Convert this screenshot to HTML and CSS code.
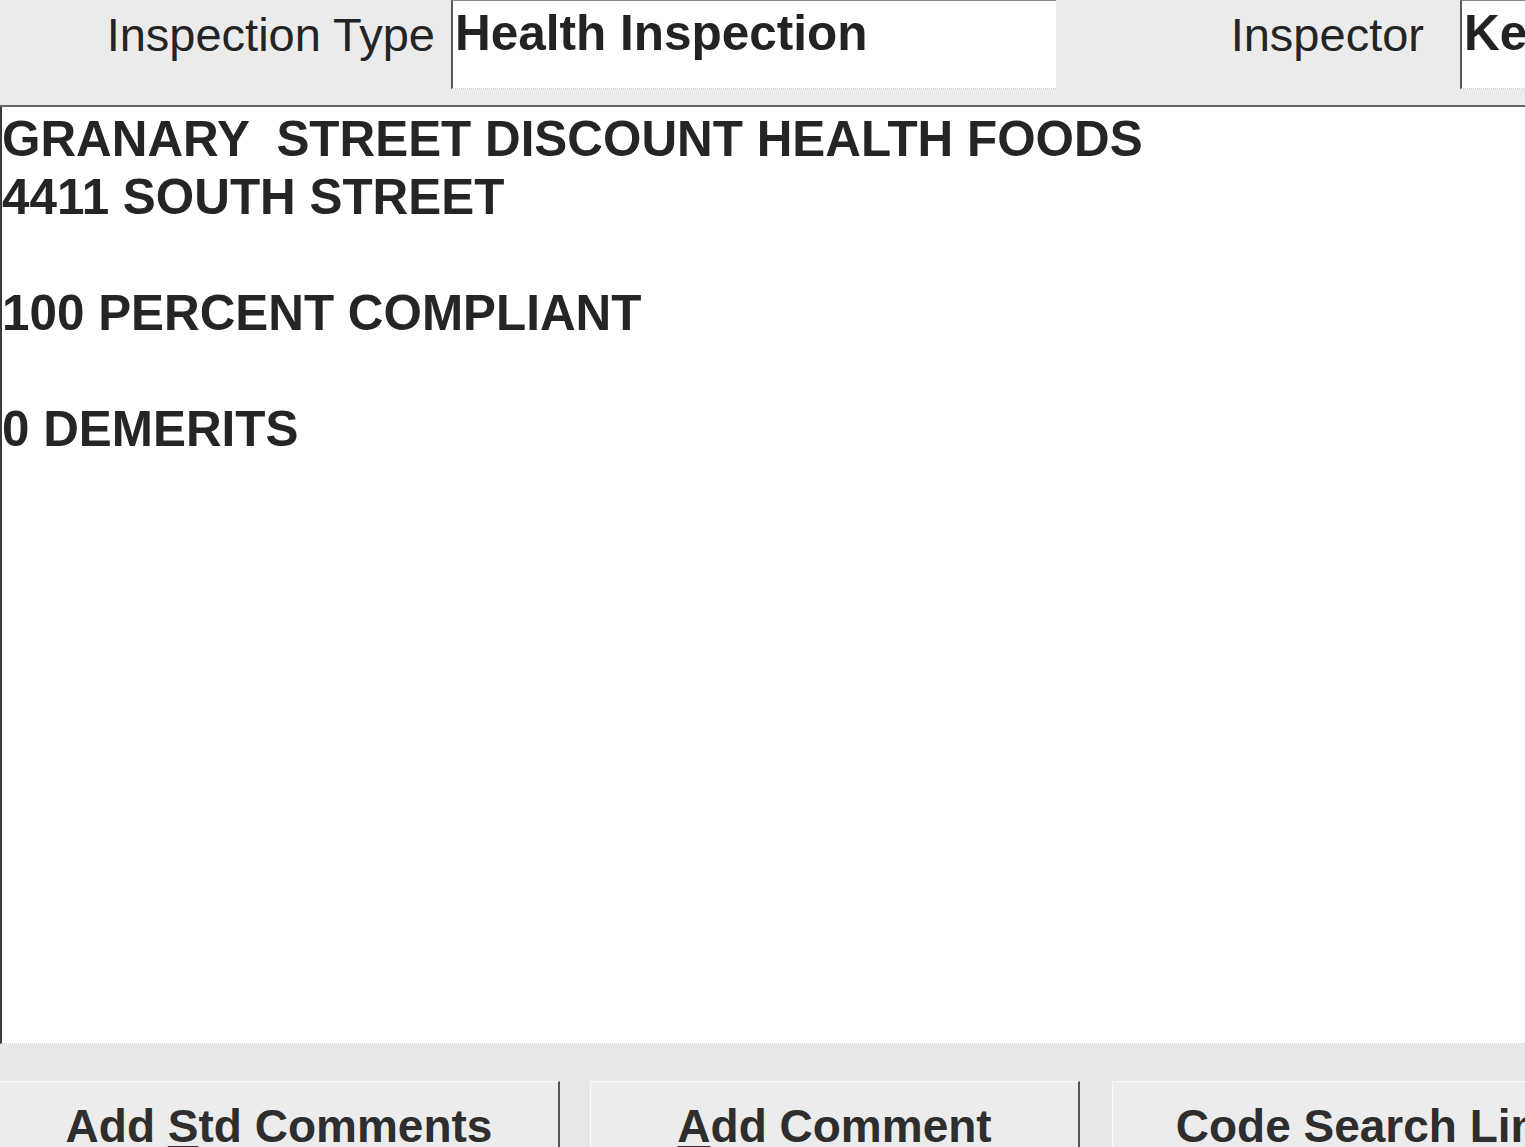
FILE: index.html
```html
<!DOCTYPE html>
<html lang="en">
<head>
<meta charset="utf-8">
<title>Inspection</title>
<link rel="stylesheet" href="styles.css">
</head>
<body>
<div class="app">
  <div class="topbar">
    <label class="lbl lbl-type">Inspection Type</label>
    <div class="field field-type">Health Inspection</div>
    <label class="lbl lbl-inspector">Inspector</label>
    <div class="field field-inspector">Kevin</div>
  </div>
  <div class="notes"><div class="line">GRANARY  STREET DISCOUNT HEALTH FOODS</div><div class="line">4411 SOUTH STREET</div><div class="line">&nbsp;</div><div class="line">100 PERCENT COMPLIANT</div><div class="line">&nbsp;</div><div class="line">0 DEMERITS</div></div>
  <div class="band"></div>
  <div class="buttons">
    <button class="btn btn-std"><span class="cap">Add <u>S</u>td Comments</span></button>
    <button class="btn btn-add"><span class="cap"><u>A</u>dd Comment</span></button>
    <button class="btn btn-code"><span class="cap">Code Search Link</span></button>
  </div>
</div>
</body>
</html>
```

FILE: styles.css
```css
html, body {
  margin: 0;
  padding: 0;
  background: #eaeaea;
  overflow: hidden;
}
body {
  font-family: "Liberation Sans", Arial, sans-serif;
  color: #262626;
  width: 1525px;
  height: 1147px;
}
.app {
  width: 1525px;
  display: flex;
  flex-direction: column;
}
.topbar {
  height: 105px;
  border-bottom: 2px solid #666;
  display: flex;
  align-items: flex-start;
  background: #ebebeb;
  white-space: nowrap;
}
.lbl {
  font-size: 47px;
  line-height: 58px;
  margin-top: 6px;
  text-align: right;
  color: #242424;
  flex: none;
}
.lbl-type {
  width: 435px;
  margin-right: 16px;
}
.lbl-inspector {
  width: 368px;
  margin-right: 36px;
}
.field {
  flex: none;
  height: 84px;
  background: #fff;
  border-left: 2px solid #5a5a5a;
  border-top: 1px solid #8a8a8a;
  border-bottom: 1px dotted #c8c8c8;
  padding: 3px 0 0 2px;
  font-size: 49.5px;
  font-weight: bold;
  line-height: 58px;
  color: #232323;
  overflow: hidden;
}
.field-type {
  width: 601px;
}
.field-inspector {
  width: 200px;
}
.notes {
  height: 933px;
  background: #fff;
  border-left: 2px solid #3a3a3a;
  border-bottom: 1px dotted #cfcfcf;
  padding-top: 3px;
  font-size: 49.4px;
  font-weight: bold;
  line-height: 58px;
  color: #252525;
  white-space: pre;
}
.line {
  height: 58px;
}
.band {
  height: 37px;
  background: #e7e7e7;
}
.buttons {
  display: flex;
  align-items: flex-start;
  height: 80px;
  background: #e7e7e7;
  overflow: hidden;
}
.btn {
  flex: none;
  height: 120px;
  margin: 0;
  background: #ececec;
  border: none;
  border-top: 1px solid #fbfbfb;
  border-left: 1px solid #fbfbfb;
  border-right: 2px solid #555;
  padding: 16px 0 0 0;
  font-family: "Liberation Sans", Arial, sans-serif;
  font-size: 46px;
  font-weight: bold;
  line-height: 56px;
  color: #2e2e2e;
  text-align: center;
  white-space: nowrap;
  display: flex;
  justify-content: center;
  align-items: flex-start;
}
.cap {
  white-space: pre;
}
.btn u {
  text-decoration-thickness: 3px;
  text-underline-offset: 4px;
}
.btn-std {
  width: 560px;
  border-left: none;
  margin-right: 30px;
}
.btn-add {
  width: 490px;
  margin-right: 32px;
}
.btn-code {
  width: 517px;
}
```
